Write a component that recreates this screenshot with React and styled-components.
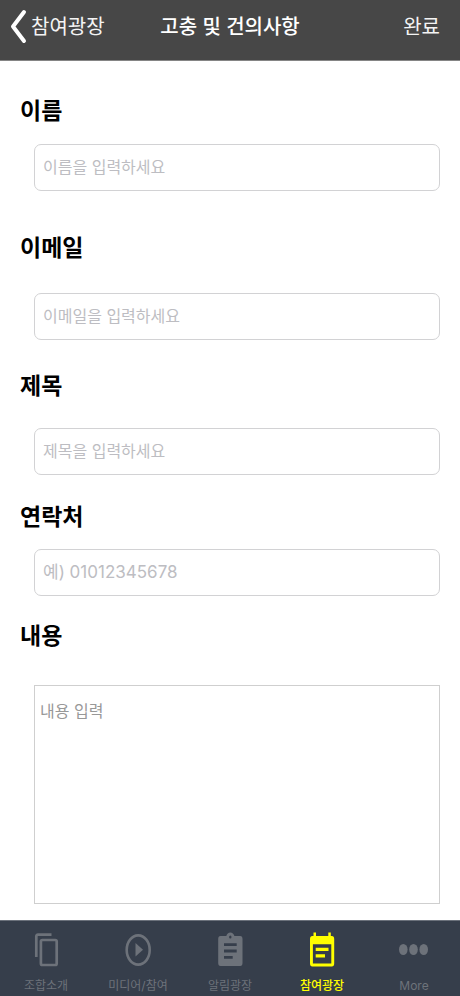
import { useState } from "react";
import styled, { createGlobalStyle } from "styled-components";

const GlobalStyle = createGlobalStyle`
  * {
    box-sizing: border-box;
  }
  body {
    margin: 0;
    background-color: #fff;
  }
  body, button, input, textarea {
    font-family: Inter, "Noto Sans CJK KR", sans-serif;
  }
`;

const Page = styled.div`
  display: flex;
  flex-direction: column;
  min-height: 100vh;
`;

// HEADER
const Header = styled.header`
  display: grid;
  grid-template-columns: 1fr auto 1fr;
  align-items: center;
  padding: 9px 10px 15px;
  background-color: #474747;
  border-bottom: 1px solid #858585;
`;

const HeaderBtn = styled.button`
  display: flex;
  align-items: center;
  justify-self: ${(props) => props.$side};
  gap: 4px;
  padding: ${(props) => (props.$side === "end" ? "0 10px" : "0")};
  border: none;
  background: none;
  color: #f4f4f4;
  font-size: 20px;
  line-height: 36px;
  white-space: nowrap;
  cursor: pointer;
`;

const Title = styled.h1`
  margin: 0;
  color: #fff;
  font-size: 20px;
  font-weight: 500;
  line-height: 36px;
  white-space: nowrap;
`;

// FORM
const Form = styled.form`
  flex: 1;
  display: flex;
  flex-direction: column;
  padding: 0 20px 16px;
`;

const Field = styled.div`
  flex: ${(props) => (props.$grow ? "1" : "none")};
  display: flex;
  flex-direction: column;
  gap: ${(props) => props.$gap}px;
  padding-top: ${(props) => props.$top}px;
`;

const Label = styled.label`
  color: #000;
  font-size: 23px;
  font-weight: 700;
  line-height: 32px;
`;

const Input = styled.input`
  height: 47px;
  margin-left: 14px;
  padding: 0 8px 2px;
  border: 1px solid #d2d2d4;
  border-radius: 7px;
  background-color: #fff;
  font-size: ${(props) => (props.type === "tel" ? "17px" : "16px")};
  &::placeholder {
    color: #bdbdc2;
    opacity: 1;
  }
`;

const TextArea = styled.textarea`
  flex: 1;
  min-height: 120px;
  margin-left: 14px;
  padding: 13px 5px;
  border: 1px solid #cfcfcf;
  border-radius: 0;
  background-color: #fff;
  font-size: 16px;
  line-height: 24px;
  resize: none;
  &::placeholder {
    color: #989898;
    opacity: 1;
  }
`;

// BOTTOM TABS
const TabBar = styled.nav`
  display: grid;
  grid-template-columns: repeat(5, 1fr);
  background-color: #363e4b;
  border-top: 1px solid #6b717b;
`;

const Tab = styled.a`
  display: flex;
  flex-direction: column;
  align-items: center;
  gap: 9px;
  padding: 11px 0 1px;
  color: ${(props) => (props.$active ? "#ffff00" : "#6d727a")};
  font-size: 12px;
  font-weight: ${(props) => (props.$active ? "500" : "400")};
  line-height: 18px;
  text-decoration: none;
  white-space: nowrap;
`;

const TabSvg = styled.svg`
  width: 30px;
  height: 36px;
`;

// ICONS
const BackIcon = () => (
  <svg width="17" height="36" viewBox="0 0 17 36" fill="none" aria-hidden="true">
    <path d="M14 3L3 17.500L14 32" stroke="#fff" strokeWidth="4" strokeLinecap="round" strokeLinejoin="round" />
  </svg>
);

const TabIcon = ({ children }) => (
  <TabSvg viewBox="0 0 30 36" fill="currentColor" aria-hidden="true">
    {children}
  </TabSvg>
);

const CopyIcon = () => (
  <TabIcon>
    <g fill="none" stroke="currentColor" strokeWidth="2.700">
      <path d="M5.300 25V4.500Q5.300 2.600 7 2.600H20.500" />
      <rect x="9.900" y="8" width="15.800" height="25" rx="1.500" />
    </g>
  </TabIcon>
);

const PlayIcon = () => (
  <TabIcon>
    <ellipse cx="15.200" cy="18" rx="11.500" ry="14.600" fill="none" stroke="currentColor" strokeWidth="2.600" />
    <path d="M12.500 11L20 17.800L12.500 24.600Z" />
  </TabIcon>
);

const ClipboardIcon = () => (
  <TabIcon>
    <path
      fillRule="evenodd"
      d="M5.500 4H11.300C12 2 13.300 0.500 15.300 0.500S18.700 2 19.400 4H25.200Q27.500 4 27.500 7V31Q27.500 34 25.200 34H5.500Q3.200 34 3.200 31V7Q3.200 4 5.500 4ZM15.300 3.500A1.200 1.500 0 1 0 15.300 6.500A1.200 1.500 0 1 0 15.300 3.500ZM9 11.200V14H21.700V11.200ZM9 17.600V20.400H21.700V17.600ZM9 24V26.800H17.700V24Z"
    />
  </TabIcon>
);

const NoteIcon = () => (
  <TabIcon>
    <path
      fillRule="evenodd"
      d="M6.500 0.500H9V4H21.300V0.500H23.800V4H24.800Q27.200 4 27.200 7V31.500Q27.200 34.500 24.800 34.500H5.400Q3 34.500 3 31.500V7Q3 4 5.400 4H6.500ZM5.900 12.200V31.500H24.300V12.200ZM8.700 15.700H21.500V19H8.700ZM8.700 22.300H18V25.600H8.700Z"
    />
  </TabIcon>
);

const MoreIcon = () => (
  <TabIcon>
    <ellipse cx="4.300" cy="17.500" rx="4.300" ry="5.500" />
    <ellipse cx="14.500" cy="17.500" rx="4.300" ry="5.500" />
    <ellipse cx="24.700" cy="17.500" rx="4.300" ry="5.500" />
  </TabIcon>
);

const fields = [
  { id: "name", label: "이름", placeholder: "이름을 입력하세요", top: 34, gap: 17 },
  { id: "email", label: "이메일", placeholder: "이메일을 입력하세요", type: "email", top: 41, gap: 29 },
  { id: "subject", label: "제목", placeholder: "제목을 입력하세요", top: 30, gap: 26 },
  { id: "phone", label: "연락처", placeholder: "예) 01012345678", type: "tel", top: 26, gap: 16 },
];

const tabs = [
  { id: "about", label: "조합소개", Icon: CopyIcon },
  { id: "media", label: "미디어/참여", Icon: PlayIcon },
  { id: "news", label: "알림광장", Icon: ClipboardIcon },
  { id: "join", label: "참여광장", Icon: NoteIcon },
  { id: "more", label: "More", Icon: MoreIcon },
];

const App = () => {
  const [values, setValues] = useState({
    name: "",
    email: "",
    subject: "",
    phone: "",
    content: "",
  });

  const handleChange = (e) => {
    setValues({ ...values, [e.target.id]: e.target.value });
  };

  return (
    <Page>
      <GlobalStyle />
      <Header>
        <HeaderBtn type="button" $side="start">
          <BackIcon />
          참여광장
        </HeaderBtn>
        <Title>고충 및 건의사항</Title>
        <HeaderBtn type="submit" form="suggestion" $side="end">
          완료
        </HeaderBtn>
      </Header>
      <Form id="suggestion" onSubmit={(e) => e.preventDefault()}>
        {fields.map((field) => (
          <Field key={field.id} $top={field.top} $gap={field.gap}>
            <Label htmlFor={field.id}>{field.label}</Label>
            <Input
              id={field.id}
              type={field.type || "text"}
              placeholder={field.placeholder}
              value={values[field.id]}
              onChange={handleChange}
            />
          </Field>
        ))}
        {/* CONTENT */}
        <Field $grow $top={24} $gap={33}>
          <Label htmlFor="content">내용</Label>
          <TextArea
            id="content"
            placeholder="내용 입력"
            value={values.content}
            onChange={handleChange}
          />
        </Field>
      </Form>
      <TabBar>
        {tabs.map(({ id, label, Icon }) => (
          <Tab key={id} href={`#${id}`} $active={id === "join"}>
            <Icon />
            {label}
          </Tab>
        ))}
      </TabBar>
    </Page>
  );
};

export default App;
